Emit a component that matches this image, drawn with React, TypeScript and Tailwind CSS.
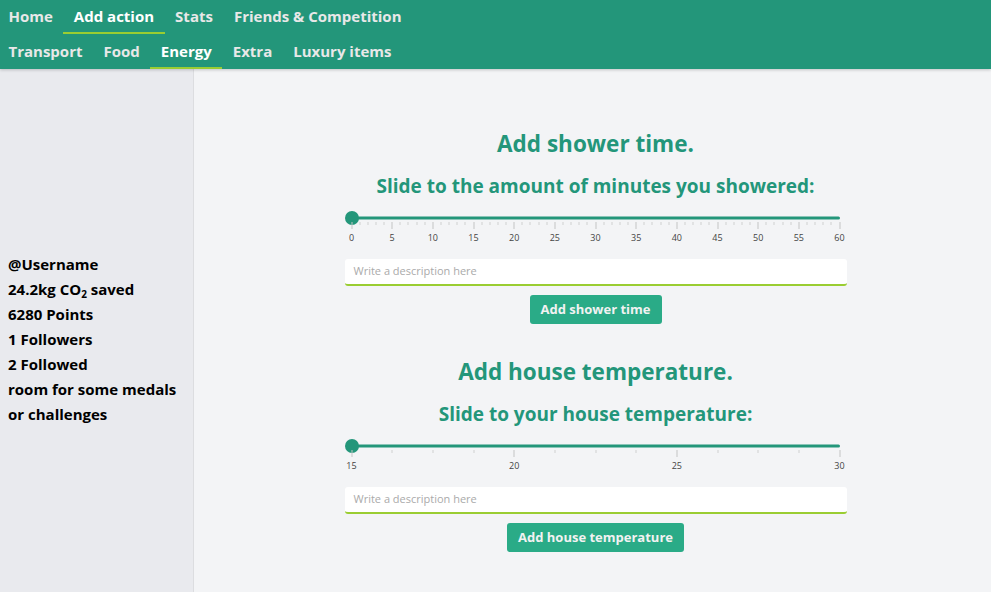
import React from "react";

const font = { fontFamily: '"Open Sans", "Noto Sans", sans-serif' };

function Slider({ min, max, intervals, labelEvery }: { min: number; max: number; intervals: number; labelEvery: number }) {
  const ticks = Array.from({ length: intervals + 1 }, (_, i) => i);
  const step = (max - min) / intervals;
  return (
    <div className="relative mx-[7px] h-[34px]">
      <div className="absolute left-0 right-0 top-[7px] h-[3px] -translate-y-1/2 rounded bg-[#23967a]" />
      <div className="absolute left-0 top-[7px] h-[14px] w-[14px] -translate-x-1/2 -translate-y-1/2 rounded-full bg-[#23967a]" />
      {ticks.map((i) => {
        const major = i % labelEvery === 0;
        const pct = (i / intervals) * 100;
        return (
          <div key={i} className="absolute top-[11px]" style={{ left: `${pct}%` }}>
            <div className={major ? "h-[7px] w-px -translate-x-1/2 bg-[#c4c4c4]" : "h-[3px] w-px -translate-x-1/2 bg-[#cfcfcf]"} />
            {major && (
              <div className="absolute top-[11px] -translate-x-1/2 text-[9px] leading-none text-[#444]">{Math.round(min + i * step)}</div>
            )}
          </div>
        );
      })}
    </div>
  );
}

function Section({ title, subtitle, min, max, intervals, labelEvery, button }: any) {
  return (
    <div className="flex flex-col items-center">
      <h1 className="text-[22.5px] font-bold leading-[30px] text-[#23967a]">{title}</h1>
      <h2 className="mt-[14px] text-[19px] font-bold leading-[26px] text-[#23967a]">{subtitle}</h2>
      <div className="mt-[12px] w-[502px]">
        <Slider min={min} max={max} intervals={intervals} labelEvery={labelEvery} />
        <div className="mt-[14px] flex h-[27px] items-center rounded-[3px] border-b-2 border-[#9acd32] bg-white px-[9px] text-[11px] text-[#aaa]">
          Write a description here
        </div>
      </div>
      <button className="mt-[9px] h-[29px] rounded-[3px] bg-[#2aab87] px-[11px] text-[13px] font-bold text-[#f2f2f2]">{button}</button>
    </div>
  );
}

export default function App() {
  const nav1 = ["Home", "Add action", "Stats", "Friends & Competition"];
  const nav2 = ["Transport", "Food", "Energy", "Extra", "Luxury items"];
  return (
    <div className="flex h-[592px] w-[991px] flex-col overflow-hidden bg-[#f3f4f6]" style={font}>
      <header className="relative z-10 flex h-[69px] flex-col bg-[#23967a] shadow-[0_1px_3px_rgba(0,0,0,0.2)]">
        <nav className="-ml-[2px] flex h-[34px]">
          {nav1.map((n) => (
            <div key={n} className={`flex items-center border-b-2 px-[10.5px] pt-[1px] text-[15px] font-bold ${n === "Add action" ? "border-[#9acd32] text-white" : "border-transparent text-[#e8e8e8]"}`}>
              {n}
            </div>
          ))}
        </nav>
        <nav className="-ml-[2px] flex h-[35px]">
          {nav2.map((n) => (
            <div key={n} className={`flex items-center border-b-2 px-[10.5px] pt-[2px] text-[15px] font-bold ${n === "Energy" ? "border-[#9acd32] text-white" : "border-transparent text-[#e8e8e8]"}`}>
              {n}
            </div>
          ))}
        </nav>
      </header>
      <div className="flex flex-1">
        <aside className="flex w-[194px] flex-col justify-center border-r border-[#dcdde0] bg-[#e9eaee] pl-[8px] pt-[18px] text-[15px] font-bold leading-[25px] text-black">
          <div>@Username</div>
          <div>
            24.2kg CO<sub className="text-[10px]">2</sub> saved
          </div>
          <div>6280 Points</div>
          <div>1 Followers</div>
          <div>2 Followed</div>
          <div>room for some medals</div>
          <div>or challenges</div>
        </aside>
        <main className="flex flex-1 flex-col items-center pl-[6px] pt-[60px]">
          <Section title="Add shower time." subtitle="Slide to the amount of minutes you showered:" min={0} max={60} intervals={60} labelEvery={5} button="Add shower time" />
          <div className="h-[33px]" />
          <Section title="Add house temperature." subtitle="Slide to your house temperature:" min={15} max={30} intervals={12} labelEvery={4} button="Add house temperature" />
        </main>
      </div>
    </div>
  );
}
